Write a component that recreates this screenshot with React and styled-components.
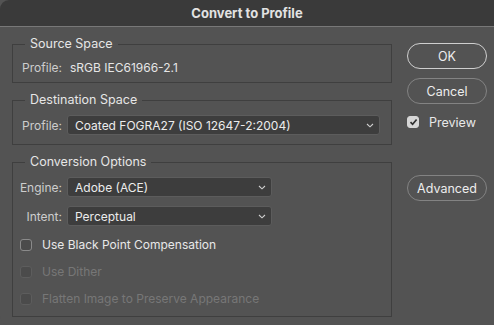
import React from "react"
import styled, { createGlobalStyle } from "styled-components"

const Global = createGlobalStyle`
  html, body {
    margin: 0;
    padding: 0;
    background: #535353;
  }
  body {
    font-family: Inter, "Noto Sans", sans-serif;
    -webkit-font-smoothing: antialiased;
  }
`

const Window = styled.div`
  width: 494px;
  height: 325px;
  background: #535353;
  border-radius: 9px 0 0 9px;
  overflow: hidden;
  display: flex;
  flex-direction: column;
`

const TitleBar = styled.div`
  height: 26px;
  flex: none;
  background: #3a3a3a;
  border-bottom: 1px solid #787878;
  display: flex;
  align-items: center;
  justify-content: center;
  color: #e2e2e2;
  font-size: 13px;
  font-weight: 700;
`

const Body = styled.div`
  display: flex;
  gap: 15px;
  padding: 0 7px 0 12px;
`

const LeftColumn = styled.div`
  width: 380px;
  display: flex;
  flex-direction: column;
  gap: 9px;
  padding-top: 9px;
`

const Group = styled.fieldset`
  margin: 0;
  padding: 0 9px ${p => p.$bottom || 0}px 0;
  border: 1px solid #3f3f3f;
  min-width: 0;
`

const Legend = styled.legend`
  margin-left: 12px;
  padding: 0 5px;
  font-size: 12.5px;
  line-height: 16px;
  color: #e6e6e6;
`

const Row = styled.div`
  display: flex;
  align-items: center;
  height: ${p => p.$h || 20}px;
  margin-top: ${p => p.$top || 0}px;
`

const Label = styled.span`
  width: 49px;
  text-align: right;
  font-size: 12px;
  color: #cdcdcd;
  flex: none;
`

const Value = styled.span`
  margin-left: 8px;
  font-size: 12px;
  color: #e6e6e6;
`

const Select = styled.div`
  margin-left: 5px;
  width: ${p => p.$w}px;
  height: 20px;
  box-sizing: border-box;
  background: #3d3d3d;
  border: 1px solid #5c5c5c;
  border-radius: 3px;
  display: flex;
  align-items: center;
  justify-content: space-between;
  padding: 0 5px 0 7px;
  font-size: 12px;
  color: #ececec;
`

const Chevron = () => (
  <svg width="8" height="5" viewBox="0 0 8 5">
    <path d="M1 1 L4 3.8 L7 1" fill="none" stroke="#cfcfcf" strokeWidth="1.1" />
  </svg>
)

const CheckRow = styled.div`
  display: flex;
  align-items: center;
  height: 27px;
  padding-left: 7px;
  font-size: 12px;
  color: ${p => (p.$disabled ? "#777777" : "#e8e8e8")};
`

const Box = styled.span`
  width: 12px;
  height: 12px;
  box-sizing: border-box;
  border-radius: 3px;
  flex: none;
  margin-right: 10px;
  display: flex;
  align-items: center;
  justify-content: center;
  background: ${p => (p.$checked ? "#d6d6d6" : "#4b4b4b")};
  border: 1px solid ${p => (p.$checked ? "#d6d6d6" : p.$disabled ? "#5d5d5d" : "#8a8a8a")};
`

const Check = () => (
  <svg width="9" height="8" viewBox="0 0 9 8">
    <path d="M1.5 4.2 L3.6 6.3 L7.6 1.5" fill="none" stroke="#2f2f2f" strokeWidth="1.7" />
  </svg>
)

const RightColumn = styled.div`
  width: 80px;
  display: flex;
  flex-direction: column;
  padding-top: 16px;
`

const Button = styled.button`
  width: 80px;
  height: 26px;
  margin-top: ${p => p.$top || 0}px;
  border-radius: 13px;
  background: transparent;
  border: 1px solid ${p => (p.$primary ? "#cfcfcf" : "#838383")};
  color: #ededed;
  font-family: inherit;
  font-size: 12.5px;
  padding: 0;
`

const PreviewRow = styled.div`
  display: flex;
  align-items: center;
  height: 20px;
  margin-top: 8px;
  font-size: 12.5px;
  color: #e8e8e8;
`

export default function App() {
  return (
    <>
      <Global />
      <Window>
        <TitleBar>Convert to Profile</TitleBar>
        <Body>
          <LeftColumn>
            <Group>
              <Legend>Source Space</Legend>
              <Row $h={30}>
                <Label>Profile:</Label>
                <Value>sRGB IEC61966-2.1</Value>
              </Row>
            </Group>
            <Group $bottom={9}>
              <Legend>Destination Space</Legend>
              <Row $top={7}>
                <Label>Profile:</Label>
                <Select $w={313}>
                  Coated FOGRA27 (ISO 12647-2:2004)
                  <Chevron />
                </Select>
              </Row>
            </Group>
            <Group $bottom={4}>
              <Legend>Conversion Options</Legend>
              <Row $top={7}>
                <Label>Engine:</Label>
                <Select $w={205}>
                  Adobe (ACE)
                  <Chevron />
                </Select>
              </Row>
              <Row $top={9}>
                <Label>Intent:</Label>
                <Select $w={205}>
                  Perceptual
                  <Chevron />
                </Select>
              </Row>
              <div style={{ marginTop: 5 }}>
                <CheckRow>
                  <Box />
                  Use Black Point Compensation
                </CheckRow>
                <CheckRow $disabled>
                  <Box $disabled />
                  Use Dither
                </CheckRow>
                <CheckRow $disabled>
                  <Box $disabled />
                  Flatten Image to Preserve Appearance
                </CheckRow>
              </div>
            </Group>
          </LeftColumn>
          <RightColumn>
            <Button $primary>OK</Button>
            <Button $top={9}>Cancel</Button>
            <PreviewRow>
              <Box $checked>
                <Check />
              </Box>
              Preview
            </PreviewRow>
            <Button $top={43}>Advanced</Button>
          </RightColumn>
        </Body>
      </Window>
    </>
  )
}
